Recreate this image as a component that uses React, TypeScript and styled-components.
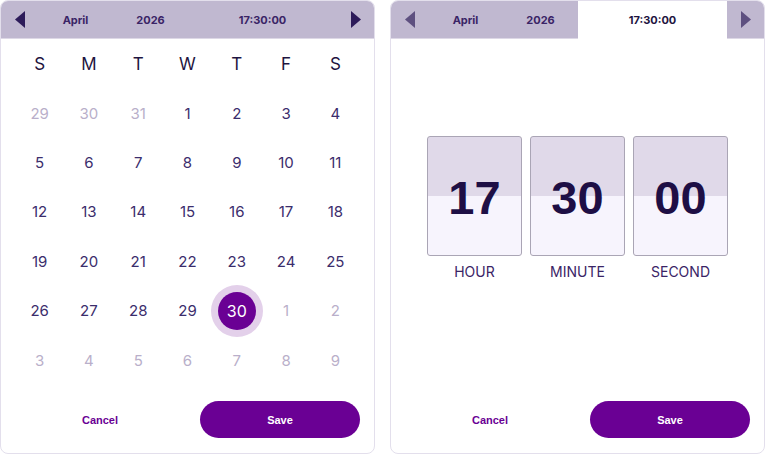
import React from 'react';
import styled, { createGlobalStyle, css } from 'styled-components';

const GlobalStyle = createGlobalStyle`
  html, body {
    margin: 0;
    padding: 0;
    background: #ffffff;
    font-family: 'Inter', 'Liberation Sans', sans-serif;
  }
  * {
    box-sizing: border-box;
  }
`;

const Page = styled.div`
  display: flex;
  gap: 15px;
  width: 765px;
  height: 454px;
`;

const Panel = styled.div`
  width: 375px;
  height: 454px;
  border: 1px solid #e3dfec;
  border-radius: 8px;
  overflow: hidden;
  display: flex;
  flex-direction: column;
  background: #ffffff;
`;

const Header = styled.div`
  display: grid;
  grid-template-columns: 37px 75px 75px 1fr 37px;
  height: 38px;
  background: #c0b8d0;
  border-bottom: 1px solid #ddd8e6;
  flex-shrink: 0;
`;

const HeaderCell = styled.div<{ $active?: boolean }>`
  display: flex;
  align-items: center;
  justify-content: center;
  font-family: 'Inter', 'Liberation Sans', sans-serif;
  font-weight: 700;
  font-size: 11px;
  color: #3a2466;
  ${(p) =>
    p.$active &&
    css`
      background: #ffffff;
      color: #1e1440;
      margin-bottom: -1px;
    `}
`;

const ArrowButton = styled.button<{ $muted?: boolean }>`
  border: none;
  background: transparent;
  padding: 0;
  display: flex;
  align-items: center;
  justify-content: center;
  color: ${(p) => (p.$muted ? '#5e5080' : '#2d1b5a')};
  cursor: pointer;
`;

const Triangle = ({ dir }: { dir: 'left' | 'right' }) => (
  <svg width="10" height="17" viewBox="0 0 10 17">
    {dir === 'left' ? (
      <polygon points="10,0 10,17 0,8.5" fill="currentColor" />
    ) : (
      <polygon points="0,0 0,17 10,8.5" fill="currentColor" />
    )}
  </svg>
);

const Body = styled.div`
  flex: 1;
  display: flex;
  flex-direction: column;
`;

const DayGrid = styled.div`
  display: grid;
  grid-template-columns: repeat(7, 1fr);
  grid-auto-rows: 49.4px;
  padding: 0 14px;
`;

const WeekDay = styled.div`
  display: flex;
  align-items: center;
  justify-content: center;
  font-size: 17px;
  color: #1e1440;
`;

const Day = styled.div<{ $outside?: boolean }>`
  display: flex;
  align-items: center;
  justify-content: center;
  font-size: 15px;
  color: ${(p) => (p.$outside ? '#b9afca' : '#3b2d6c')};
`;

const SelectedDot = styled.span`
  width: 38px;
  height: 38px;
  border-radius: 50%;
  background: #6a0094;
  color: #ffffff;
  display: flex;
  align-items: center;
  justify-content: center;
  box-shadow: 0 0 0 7px #e3d0ea;
  font-size: 16px;
`;

const Footer = styled.div`
  display: grid;
  grid-template-columns: 170px 160px;
  column-gap: 15px;
  padding: 0 15px 15px 14px;
  margin-top: auto;
`;

const TextButton = styled.button`
  height: 37px;
  border: none;
  background: transparent;
  font-family: 'Liberation Sans', sans-serif;
  font-weight: 700;
  font-size: 11px;
  color: #6a0094;
  cursor: pointer;
`;

const SaveButton = styled.button`
  height: 37px;
  border: none;
  border-radius: 19px;
  background: #6a0094;
  font-family: 'Liberation Sans', sans-serif;
  font-weight: 700;
  font-size: 11px;
  color: #ffffff;
  cursor: pointer;
`;

const TimeArea = styled.div`
  flex: 1;
  display: flex;
  justify-content: center;
  gap: 8px;
  padding-top: 97px;
`;

const TimeColumn = styled.div`
  display: flex;
  flex-direction: column;
  align-items: center;
`;

const FlipBox = styled.div`
  width: 95px;
  height: 120px;
  border: 1px solid #aaa5b5;
  border-radius: 3px;
  background: linear-gradient(#e0d9e9 0 50%, #f7f4fd 50% 100%);
  display: flex;
  align-items: center;
  justify-content: center;
  font-family: 'Liberation Sans', sans-serif;
  font-weight: 700;
  font-size: 47px;
  color: #1e0f45;
  padding-top: 2px;
`;

const TimeLabel = styled.div`
  margin-top: 7px;
  font-size: 14px;
  color: #3a2466;
  text-transform: uppercase;
`;

const weekDays = ['S', 'M', 'T', 'W', 'T', 'F', 'S'];

const days: { n: number; outside?: boolean }[] = [
  { n: 29, outside: true },
  { n: 30, outside: true },
  { n: 31, outside: true },
  ...Array.from({ length: 30 }, (_, i) => ({ n: i + 1 })),
  ...Array.from({ length: 9 }, (_, i) => ({ n: i + 1, outside: true })),
];

const PickerHeader = ({ timeActive }: { timeActive?: boolean }) => (
  <Header>
    <ArrowButton $muted={timeActive}>
      <Triangle dir="left" />
    </ArrowButton>
    <HeaderCell>April</HeaderCell>
    <HeaderCell>2026</HeaderCell>
    <HeaderCell $active={timeActive}>17:30:00</HeaderCell>
    <ArrowButton $muted={timeActive}>
      <Triangle dir="right" />
    </ArrowButton>
  </Header>
);

const PickerFooter = () => (
  <Footer>
    <TextButton>Cancel</TextButton>
    <SaveButton>Save</SaveButton>
  </Footer>
);

const App: React.FC = () => {
  const selected = 30;

  return (
    <>
      <GlobalStyle />
      <Page>
        <Panel>
          <PickerHeader />
          <Body>
            <DayGrid>
              {weekDays.map((d, i) => (
                <WeekDay key={i}>{d}</WeekDay>
              ))}
              {days.map((d, i) => (
                <Day key={i} $outside={d.outside}>
                  {!d.outside && d.n === selected ? <SelectedDot>{d.n}</SelectedDot> : d.n}
                </Day>
              ))}
            </DayGrid>
            <PickerFooter />
          </Body>
        </Panel>
        <Panel>
          <PickerHeader timeActive />
          <Body>
            <TimeArea>
              {[
                ['17', 'Hour'],
                ['30', 'Minute'],
                ['00', 'Second'],
              ].map(([v, label]) => (
                <TimeColumn key={label}>
                  <FlipBox>{v}</FlipBox>
                  <TimeLabel>{label}</TimeLabel>
                </TimeColumn>
              ))}
            </TimeArea>
            <PickerFooter />
          </Body>
        </Panel>
      </Page>
    </>
  );
};

export default App;
